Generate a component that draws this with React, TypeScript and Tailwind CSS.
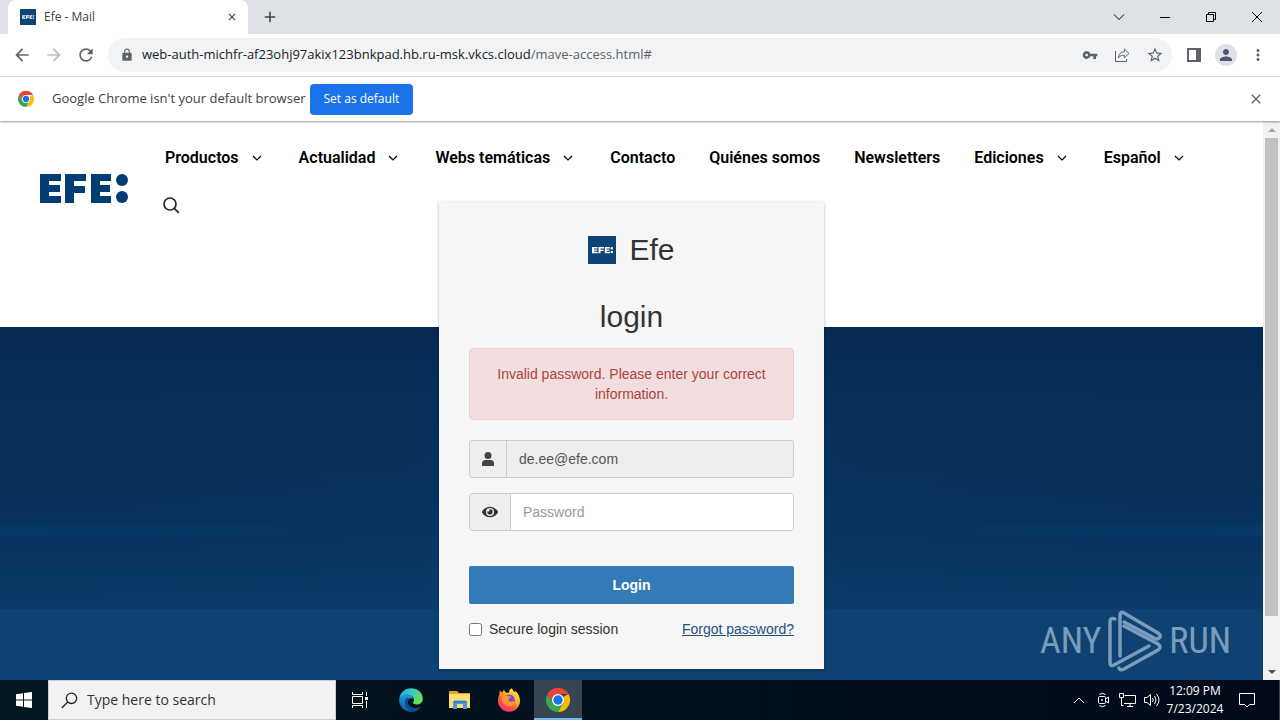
import { useState } from "react";
import type { ReactNode } from "react";
import {
  MdAdd,
  MdArrowBack,
  MdArrowForward,
  MdClose,
  MdLock,
  MdMoreVert,
  MdPerson,
  MdRefresh,
  MdStarBorder,
  MdVpnKey,
} from "react-icons/md";
import { FaEye } from "react-icons/fa";

const navItems = [
  { label: "Productos", menu: true },
  { label: "Actualidad", menu: true },
  { label: "Webs temáticas", menu: true },
  { label: "Contacto", menu: false },
  { label: "Quiénes somos", menu: false },
  { label: "Newsletters", menu: false },
  { label: "Ediciones", menu: true },
  { label: "Español", menu: true },
];

function ChromeLogo({ className }: { className: string }) {
  return (
    <svg viewBox="0 0 48 48" className={className} aria-hidden>
      <path d="M24 24 3.2 12A24 24 0 0 1 44.8 12H24Z" fill="#ea4335" />
      <path d="M24 24 44.8 12A24 24 0 0 1 24 48L34.4 30Z" fill="#fbbc04" />
      <path d="M24 24 34.4 30 24 48A24 24 0 0 1 3.2 12L13.6 30Z" fill="#34a853" />
      <path d="M24 12H44.8A24 24 0 0 0 3.2 12L13.6 30Z" fill="#ea4335" />
      <circle cx="24" cy="24" r="12" fill="#fff" />
      <circle cx="24" cy="24" r="9.4" fill="#1a73e8" />
    </svg>
  );
}

function EfeBadge({ className }: { className: string }) {
  return (
    <svg viewBox="0 0 28 28" className={className} aria-hidden>
      <rect width="28" height="28" fill="#0f4376" />
      <g fill="#fff">
        <path d="M4 11h5.600v1.500H6v.9h3.200v1.400H6v.9h3.700v1.500H4Z" />
        <path d="M10.500 11h5.500v1.500h-3.500v1.200h3.100v1.400h-3.100v2.100h-2Z" />
        <path d="M16.800 11h5v1.500h-3.200v.9h2.800v1.400h-2.800v.9h3.300v1.500h-5.100Z" />
        <circle cx="23.800" cy="12.300" r="1.200" />
        <circle cx="23.800" cy="16" r="1.200" />
      </g>
    </svg>
  );
}

function EfeLogo() {
  return (
    <svg viewBox="0 0 88 30" className="h-[30px] w-[88px]" role="img" aria-label="EFE">
      <g fill="#003d73">
        <path d="M0 0h21v7H9v4h11v7H9v4h12v7H0Z" />
        <path d="M25 0h21v7H34v5h11v7H34v10h-9Z" />
        <path d="M51 0h20v7H60v4h10v7H60v4h11v7H51Z" />
        <circle cx="82" cy="6" r="6" />
        <circle cx="82" cy="23" r="6" />
      </g>
    </svg>
  );
}

function TabStrip() {
  return (
    <div className="flex h-[34px] shrink-0 items-center bg-[#dee1e6] pl-2">
      <div className="flex h-full w-60 items-center rounded-t-lg bg-white pr-2 pl-3">
        <EfeBadge className="size-4" />
        <span className="ml-2 flex-1 text-xs text-[#3c4043]">Efe - Mail</span>
        <button aria-label="Close tab" className="flex size-4 items-center justify-center">
          <MdClose className="size-3 text-[#3c4043]" />
        </button>
      </div>
      <button aria-label="New tab" className="ml-3 flex size-5 items-center justify-center">
        <MdAdd className="size-[18px] text-[#3c4043]" />
      </button>
      <div className="ml-auto flex h-full items-center text-black">
        <button aria-label="Search tabs" className="flex w-[46px] justify-center">
          <svg viewBox="0 0 12 12" className="size-3 fill-none stroke-current">
            <path d="M1 3.5 6 8.5l5-5" />
          </svg>
        </button>
        <button aria-label="Minimize" className="flex w-[46px] justify-center">
          <svg viewBox="0 0 12 12" className="size-3 fill-none stroke-current">
            <path d="M1 6.5h10" />
          </svg>
        </button>
        <button aria-label="Restore" className="flex w-[46px] justify-center">
          <svg viewBox="0 0 12 12" className="size-3 fill-none stroke-current">
            <path d="M1.5 3.5h7v7h-7ZM3.5 3.5v-2h7v7h-2" />
          </svg>
        </button>
        <button aria-label="Close window" className="flex w-[46px] justify-center">
          <svg viewBox="0 0 12 12" className="size-3 fill-none stroke-current">
            <path d="m1 1 10 10M11 1 1 11" />
          </svg>
        </button>
      </div>
    </div>
  );
}

function Toolbar() {
  return (
    <div className="flex h-[43px] shrink-0 items-center border-b border-[#dadce0] bg-white px-3 text-[#5f6368]">
      <button aria-label="Back" className="flex w-8">
        <MdArrowBack className="size-5" />
      </button>
      <button aria-label="Forward" className="flex w-8">
        <MdArrowForward className="size-5 text-[#bbbdc0]" />
      </button>
      <button aria-label="Reload" className="flex w-8">
        <MdRefresh className="size-5" />
      </button>
      <div className="flex h-[34px] flex-1 items-center rounded-full bg-[#f1f3f4] pr-2 pl-3">
        <MdLock className="size-3.5 shrink-0" />
        <div className="ml-2 flex-1 truncate text-[13px] text-[#202124]">
          web-auth-michfr-af23ohj97akix123bnkpad.hb.ru-msk.vkcs.cloud
          <span className="text-[#5f6368]">/mave-access.html#</span>
        </div>
        <div className="flex items-center gap-4">
          <button aria-label="Passwords">
            <MdVpnKey className="size-4" />
          </button>
          <button aria-label="Share">
            <svg viewBox="0 0 16 16" className="size-4 fill-none stroke-current">
              <path d="M1.5 4v10.5h11V12" />
              <path d="M10.3 2v2.7C6.600 5 4.600 7.500 4.300 11c1.500-2 3.300-2.800 6-2.800v2.700L15 6.400Z" strokeLinejoin="round" />
            </svg>
          </button>
          <button aria-label="Bookmark">
            <MdStarBorder className="size-[18px]" />
          </button>
        </div>
      </div>
      <div className="ml-3 flex items-center gap-[11px]">
        <button aria-label="Side panel" className="flex size-5 items-center justify-center">
          <svg viewBox="0 0 14 14" className="size-3.5">
            <path d="M0 0h14v14H0ZM2 2v10h7V2Z" fill="currentColor" fillRule="evenodd" />
          </svg>
        </button>
        <button
          aria-label="Profile"
          className="flex size-[22px] items-center justify-center rounded-full bg-[#dee1e9] text-[#50546e]"
        >
          <MdPerson className="size-[18px]" />
        </button>
        <button aria-label="Menu" className="flex w-5 justify-center">
          <MdMoreVert className="size-[18px]" />
        </button>
      </div>
    </div>
  );
}

function InfoBar() {
  return (
    <div className="relative z-10 flex h-11 shrink-0 items-center bg-white pr-4 pl-[18px] shadow-[0_1px_2px_rgba(0,0,0,0.4)]">
      <ChromeLogo className="size-4" />
      <p className="ml-[18px] text-[13px] text-[#3c4043]">Google Chrome isn't your default browser</p>
      <button className="ml-1 h-[31px] rounded bg-[#1a73e8] px-3.5 text-xs text-white">Set as default</button>
      <button aria-label="Dismiss" className="ml-auto">
        <MdClose className="size-4 text-[#5f6368]" />
      </button>
    </div>
  );
}

function SiteHeader() {
  return (
    <header className="flex h-[206px] shrink-0 bg-white pt-[13px] pl-10">
      <div className="pt-10">
        <EfeLogo />
      </div>
      <nav className="ml-[37px] font-[Roboto] text-base font-semibold text-black">
        <ul className="flex h-12 items-center gap-[34px]">
          {navItems.map((item) => (
            <li key={item.label}>
              <a href="#" className="flex items-center whitespace-nowrap">
                {item.label}
                {item.menu && (
                  <svg viewBox="0 0 16 16" className="ml-2.5 size-4 fill-none stroke-current" strokeWidth="1.200">
                    <path d="m4 6 4 4 4-4" />
                  </svg>
                )}
              </a>
            </li>
          ))}
        </ul>
        <button aria-label="Buscar" className="flex h-[46px] items-center">
          <svg viewBox="0 0 18 18" className="-ml-[3px] size-[18px] fill-none stroke-[#222]" strokeWidth="1.700">
            <circle cx="8" cy="8" r="6" />
            <path d="m12.300 12.300 4.500 4.500" />
          </svg>
        </button>
      </nav>
    </header>
  );
}

function LoginCard() {
  const [password, setPassword] = useState("");
  const [secure, setSecure] = useState(false);

  return (
    <form className="absolute inset-x-0 top-[81px] mx-auto w-[385px] bg-[#f6f6f6] px-[30px] pt-[31px] pb-[30px] font-['Liberation_Sans',Arial,sans-serif] text-sm leading-5 text-[#333] shadow-[0_1px_3px_rgba(0,0,0,0.3)]">
      <h1 className="flex items-center justify-center gap-[13px] text-3xl leading-[33px]">
        <EfeBadge className="size-7" />
        Efe
      </h1>
      <h2 className="mt-[34px] text-center text-3xl leading-[33px]">login</h2>
      <div
        role="alert"
        className="mt-[15px] rounded border border-[#ebccd1] bg-[#f2dede] p-[15px] text-center text-[#a94442]"
      >
        Invalid password. Please enter your correct information.
      </div>
      <div className="mt-5 flex h-[38px] overflow-hidden rounded-[3px] border border-[#ccc] bg-[#eee]">
        <label htmlFor="email" aria-label="Email" className="flex w-9 shrink-0 items-center justify-center">
          <svg viewBox="0 0 14 16" className="h-4 w-3.5" fill="#444">
            <circle cx="7" cy="4.500" r="3.500" />
            <path d="M1 15v-2.500Q1 9 4.500 9h5Q13 9 13 12.500V15Z" />
          </svg>
        </label>
        <input
          id="email"
          type="text"
          readOnly
          value="de.ee@efe.com"
          className="min-w-0 flex-1 border-l border-[#ccc] px-3 text-[#555] outline-none"
        />
      </div>
      <div className="mt-[15px] flex h-[38px] overflow-hidden rounded-[3px] border border-[#ccc] bg-[#eee]">
        <label htmlFor="password" aria-label="Password" className="flex w-10 shrink-0 items-center justify-center">
          <FaEye className="size-4 text-[#333]" />
        </label>
        <input
          id="password"
          type="password"
          placeholder="Password"
          value={password}
          onChange={(e) => setPassword(e.target.value)}
          className="min-w-0 flex-1 border-l border-[#ccc] bg-white px-3 text-[#555] outline-none placeholder:text-[#999]"
        />
      </div>
      <button type="button" className="mt-[35px] h-[38px] w-full rounded-xs bg-[#337ab7] font-bold text-white">
        Login
      </button>
      <div className="mt-[15px] flex items-center justify-between">
        <label className="flex items-center gap-[7px]">
          <input
            type="checkbox"
            checked={secure}
            onChange={(e) => setSecure(e.target.checked)}
            className="size-[13px]"
          />
          Secure login session
        </label>
        <a href="#" className="text-[#23527c] underline">
          Forgot password?
        </a>
      </div>
    </form>
  );
}

function Watermark() {
  return (
    <div
      className="absolute right-8 bottom-2 flex items-center gap-1.5 font-['Roboto_Condensed','Liberation_Sans_Narrow',Roboto,sans-serif] text-4xl text-[#a9c4dc] opacity-70"
      aria-hidden
    >
      <span>ANY</span>
      <svg viewBox="0 0 56 62" className="h-[62px] w-14 fill-none stroke-current" strokeWidth="3.500" strokeLinecap="round">
        <path d="M8 9Q3 7 3 12v40q0 5 4 3L42 36" />
        <path d="M13 46V5q0-4 4-2l34 20q4 3 1 5-2 2-5 0L17 12" />
        <path d="M17 16 51 34q4 3 0 6L17 59q-4 2-5-1" />
      </svg>
      <span>RUN</span>
    </div>
  );
}

function Scrollbar() {
  return (
    <div className="flex w-[17px] shrink-0 flex-col items-center bg-[#f1f1f1]" aria-hidden>
      <div className="flex h-[17px] items-center">
        <svg viewBox="0 0 8 4" className="h-1 w-2 fill-[#a3a3a3]">
          <path d="m0 4 4-4 4 4Z" />
        </svg>
      </div>
      <div className="w-[13px] flex-1">
        <div className="h-[91%] bg-[#c1c1c1]" />
      </div>
      <div className="flex h-[17px] items-center">
        <svg viewBox="0 0 8 4" className="h-1 w-2 fill-[#505050]">
          <path d="m0 0 4 4 4-4Z" />
        </svg>
      </div>
    </div>
  );
}

function TaskbarApp({ label, active, children }: { label: string; active?: boolean; children: ReactNode }) {
  return (
    <button
      aria-label={label}
      className={
        active
          ? "flex h-full w-12 items-center justify-center border-b-2 border-[#76b9ed] bg-[#36454f] pt-0.5"
          : "flex h-full w-12 items-center justify-center"
      }
    >
      {children}
    </button>
  );
}

function EdgeLogo() {
  return (
    <svg viewBox="0 0 24 24" className="size-6">
      <defs>
        <linearGradient id="edge-top" x1="0" y1="0" x2="1" y2="0.500">
          <stop offset="0" stopColor="#2aa9e0" />
          <stop offset="0.500" stopColor="#35c6c9" />
          <stop offset="1" stopColor="#6be04f" />
        </linearGradient>
        <linearGradient id="edge-body" x1="0" y1="0" x2="0" y2="1">
          <stop offset="0" stopColor="#1e9be2" />
          <stop offset="1" stopColor="#0c59a4" />
        </linearGradient>
      </defs>
      <path d="M.3 11.500C.6 5 5.700.2 12 .2c7 0 11.800 4.800 11.800 10.300 0 4-2.800 6-5.900 6-2.500 0-3.900-.9-3.900-1.700 0-.7 1-1.100 1-3.100 0-2.500-2.500-4.900-6.200-4.900-4.100 0-7.500 2-8.500 4.700Z" fill="url(#edge-top)" />
      <path d="M.2 12.500C.3 8.800 3.600 6.500 7.500 6.500c4.500 0 7.500 2.500 7.500 5-1-1.200-2.600-1.600-4-1-2.500 1.200-3 5-.5 7.600 2.700 2.800 7.300 2.900 11.300.6-3.200 4.800-8 5.700-12 4.800C4 22.300.2 17.500.2 12.500Z" fill="url(#edge-body)" />
      <path d="M8 9.500c-2.500 2.500-2.800 6.500-.5 9.700 2 2.800 5 4.300 8 3.900 2.700-.7 4.800-2.200 6.300-4.400-4 2.300-8.600 2.200-11.300-.6C8 15.500 8.500 11.700 11 10.500Z" fill="#114a8b" />
    </svg>
  );
}

function FolderLogo() {
  return (
    <svg viewBox="0 0 24 22" className="h-[22px] w-6">
      <path d="M1 3q0-1 1-1h7l2 2h10q1 0 1 1v14H1Z" fill="#e5a32c" />
      <path d="M1 5h21v14H1Z" fill="#ffdc78" />
      <path d="M5 20v-7q0-1.500 1.500-1.500h11Q19 11.500 19 13v7h-4v-4q0-1-1-1h-4q-1 0-1 1v4Z" fill="#4a9bd1" />
      <path d="M6 12h12v1.500H6Z" fill="#347eae" />
    </svg>
  );
}

function FirefoxLogo() {
  return (
    <svg viewBox="0 0 24 24" className="size-6">
      <defs>
        <linearGradient id="fox-fire" x1="0.900" y1="0" x2="0.200" y2="1">
          <stop offset="0" stopColor="#fff14f" />
          <stop offset="0.400" stopColor="#ffb124" />
          <stop offset="0.700" stopColor="#ff4f45" />
          <stop offset="1" stopColor="#f22c72" />
        </linearGradient>
      </defs>
      <path d="M2.300 6.500 2.700 2.500Q4 4 5.200 4.500L7 1.500q.2 2 2.200 3.200L12 4.500C12 2.500 13 1 15 .3q.5 2.500 2.700 3.900l.8-1.200c2.900 2.500 4.500 6 4.500 9.700A11 11 0 0 1 1 12.800q0-3.300 1.300-6.300Z" fill="url(#fox-fire)" />
      <circle cx="12.300" cy="12.200" r="5.600" fill="#7449d7" />
      <path d="M5.200 7.500c2-1 4.200-.6 5.500.6 1.500.3 3 .1 3.700.5 0 1-2.200 1.500-3 2.400-.4 2 1.600 3.200 3.700 2.500 2-.7 3.300.2 2.500 1.500-1.400 2.700-5.700 4.200-9 2.200-3.800-2.400-4.300-6.400-3.400-9.700Z" fill="#ff9632" />
      <path d="M14.500 5.500c3.300.7 5.500 3.700 5 7-.2-1.500-.7-2.500-1.700-3.200.4 1 .3 2 .1 2.700-.6-2.700-1.500-4.700-3.400-6.500Z" fill="#ffbd32" />
    </svg>
  );
}

function Taskbar() {
  return (
    <footer className="flex h-10 shrink-0 items-center bg-linear-to-r from-[#02171f] to-[#020a1a] text-white">
      <button aria-label="Start" className="flex w-12 justify-center">
        <svg viewBox="0 0 16 16" className="size-4 fill-white">
          <path d="m0 2.300 7-1V7.500H0ZM8 1.100 16 0v7.500H8ZM0 8.500h7v6.200l-7-1ZM8 8.500h8V16l-8-1.100Z" />
        </svg>
      </button>
      <div className="flex h-full w-72 items-center border border-[#cdcdcd] bg-[#f2f2f2] pl-3">
        <svg viewBox="0 0 17 17" className="size-[17px] fill-none stroke-[#222]" strokeWidth="1.300">
          <circle cx="10.500" cy="6.300" r="5.200" />
          <path d="M6.800 10 .8 16" />
        </svg>
        <input
          type="text"
          aria-label="Type here to search"
          placeholder="Type here to search"
          className="ml-[9px] min-w-0 flex-1 text-sm text-[#333] outline-none placeholder:text-[#333]"
        />
      </div>
      <TaskbarApp label="Task view">
        <svg viewBox="0 0 16 16" className="size-4 fill-none stroke-white">
          <path d="M.5 0v2.500h10V0M.5 16v-2.500h10V16M.5 4.500h10v7H.5ZM14.500 0v4M14.500 9v7" />
          <path d="M13 5h3v3h-3Z" className="fill-white stroke-none" />
        </svg>
      </TaskbarApp>
      <div className="ml-[3px] flex h-full gap-px">
        <TaskbarApp label="Edge">
          <EdgeLogo />
        </TaskbarApp>
        <TaskbarApp label="File Explorer">
          <FolderLogo />
        </TaskbarApp>
        <TaskbarApp label="Firefox">
          <FirefoxLogo />
        </TaskbarApp>
        <TaskbarApp label="Chrome" active>
          <ChromeLogo className="size-6" />
        </TaskbarApp>
      </div>
      <div className="ml-auto flex h-full items-center">
        <svg viewBox="0 0 12 12" className="size-3 fill-none stroke-white">
          <path d="m1 9 5-5 5 5" />
        </svg>
        <svg viewBox="0 0 14 16" className="ml-3 h-4 w-3.5 fill-none stroke-white">
          <rect x="1.500" y="4.500" width="7" height="7" rx="1" />
          <path d="m8.500 7 3-2v6l-3-2M2.500 2.500q3-2.500 6 0M2.500 13.500q3 2.500 6 0" />
          <circle cx="5" cy="8" r="0.600" />
        </svg>
        <svg viewBox="0 0 17 16" className="ml-2 h-4 w-[17px] fill-none stroke-white">
          <path d="M5.500 3.500h11v8H5M8 14.500h6M11 11.500v3M.5 1.500h4v4h-4ZM2.500 5.500v8h2" />
        </svg>
        <svg viewBox="0 0 17 16" className="ml-2 h-4 w-[17px] fill-none stroke-white">
          <path d="M.5 5.500h2.500l3.500-3v11l-3.500-3H.5ZM8.500 6q1.500 2 0 4M10.500 4q3 4 0 8M12.500 2q5 6 0 12" />
        </svg>
        <div className="ml-1 w-[60px] text-center text-xs leading-[18px]">
          <div>12:09 PM</div>
          <div>7/23/2024</div>
        </div>
        <svg viewBox="0 0 16 16" className="mr-6 ml-3.5 size-4 fill-none stroke-white">
          <path d="M.5 1.500h15v11h-5L8 15l-2.500-2.500h-5Z" />
        </svg>
        <div className="h-full w-px bg-[#3c4650]" />
      </div>
    </footer>
  );
}

export default function App() {
  return (
    <div className="flex h-screen flex-col overflow-hidden bg-white font-['Open_Sans',sans-serif]">
      <TabStrip />
      <Toolbar />
      <InfoBar />
      <div className="flex min-h-0 flex-1">
        <main className="relative flex min-w-0 flex-1 flex-col overflow-hidden bg-[#0f4272]">
          <SiteHeader />
          <div className="h-[282px] shrink-0 bg-[radial-gradient(ellipse_30%_4%_at_0%_72%,rgba(8,65,115,0.5),transparent),radial-gradient(ellipse_30%_4%_at_100%_72%,rgba(8,65,115,0.5),transparent),radial-gradient(ellipse_at_0%_60%,rgba(1,35,75,0.35),transparent_45%),radial-gradient(ellipse_at_100%_60%,rgba(1,35,75,0.35),transparent_45%),linear-gradient(to_bottom,#052a52,#07305a_35%,#0a3866_75%,#0b3b69)]" />
          <LoginCard />
          <Watermark />
        </main>
        <Scrollbar />
      </div>
      <Taskbar />
    </div>
  );
}
